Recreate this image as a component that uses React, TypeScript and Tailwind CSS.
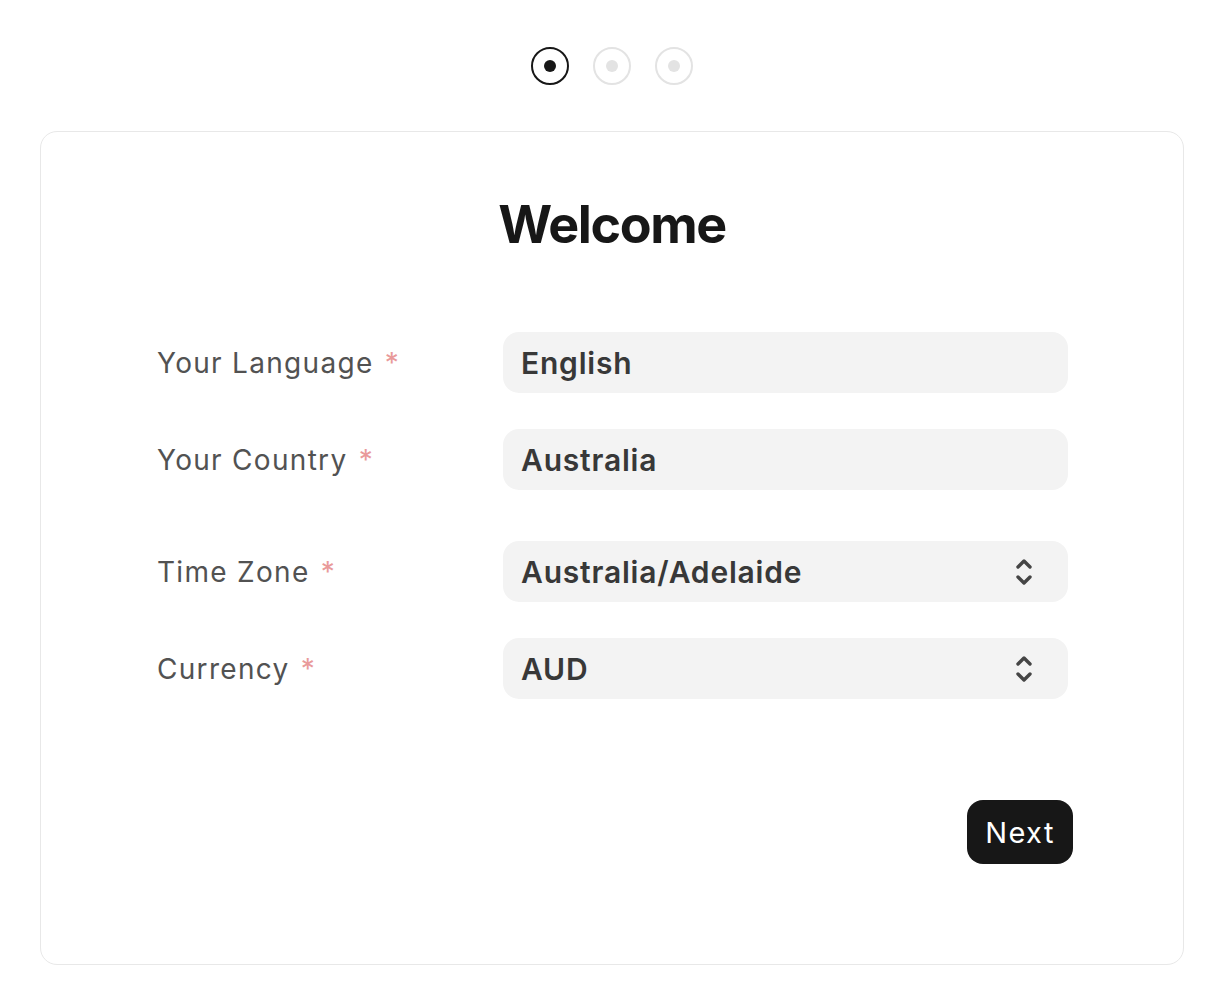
import React from "react";

function Chevrons() {
  return (
    <svg width="18" height="30" viewBox="0 0 18 30" fill="none" className="shrink-0">
      <path d="M3 10 L9 4 L15 10" stroke="#454545" strokeWidth="3.4" strokeLinecap="round" strokeLinejoin="round" />
      <path d="M3 20 L9 26 L15 20" stroke="#454545" strokeWidth="3.4" strokeLinecap="round" strokeLinejoin="round" />
    </svg>
  );
}

function Row({ label, value, select, className = "" }: { label: string; value: string; select?: boolean; className?: string }) {
  return (
    <div className={"flex items-center " + className}>
      <div className="w-[346px] shrink-0 text-[28px] leading-none tracking-[1.3px] text-[#525252]">
        {label} <span className="ml-[2px] text-[#e99a9a]">*</span>
      </div>
      <div className="flex h-[61px] w-[565px] items-center justify-between rounded-[16px] bg-[#f3f3f3] pl-[18px] pr-[35px]">
        <span className="text-[30px] font-semibold leading-none tracking-[0.8px] text-[#383838]">{value}</span>
        {select && <Chevrons />}
      </div>
    </div>
  );
}

function Dot({ active }: { active?: boolean }) {
  return (
    <div
      className={
        "flex h-[38px] w-[38px] items-center justify-center rounded-full border-2 " +
        (active ? "border-[#171717]" : "border-[#e3e3e3]")
      }
    >
      <div className={"h-[12px] w-[12px] rounded-full " + (active ? "bg-[#171717]" : "bg-[#e3e3e3]")} />
    </div>
  );
}

export default function App() {
  return (
    <div className="min-h-[1006px] w-full bg-white" style={{ fontFamily: "Inter, 'Noto Sans', sans-serif" }}>
      <div className="mx-[40px] flex w-[1144px] justify-center pt-[47px]">
        <div className="flex items-center gap-[24px]">
          <Dot active />
          <Dot />
          <Dot />
        </div>
      </div>
      <div className="mx-[40px] mt-[46px] flex h-[834px] w-[1144px] flex-col rounded-[17px] border border-[#e8e8e8] pt-[67px]">
        <h1 className="text-center text-[52px] font-bold leading-[52px] tracking-[-1.4px] text-[#171717]">Welcome</h1>
        <div className="mt-[81px] flex flex-col pl-[116px]">
          <Row label="Your Language" value="English" />
          <Row label="Your Country" value="Australia" className="mt-[36px]" />
          <Row label="Time Zone" value="Australia/Adelaide" select className="mt-[51px]" />
          <Row label="Currency" value="AUD" select className="mt-[36px]" />
        </div>
        <div className="mt-[101px] flex justify-end pr-[110px]">
          <button className="flex h-[64px] w-[106px] items-center justify-center rounded-[16px] bg-[#171717] text-[29px] leading-none tracking-[1.4px] text-white">
            Next
          </button>
        </div>
      </div>
    </div>
  );
}
